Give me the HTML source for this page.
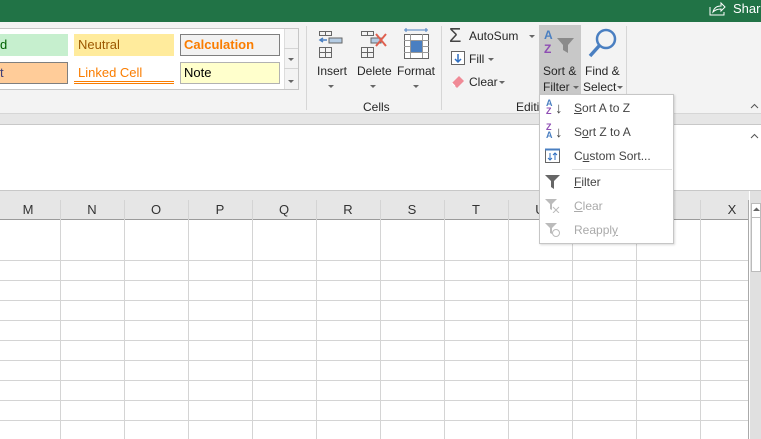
<!DOCTYPE html>
<html><head><style>
*{margin:0;padding:0;box-sizing:border-box}
body{width:761px;height:439px;overflow:hidden;position:relative;font-family:"Liberation Sans",sans-serif;font-size:12px;color:#262626;background:#fff}
.a{position:absolute}
.t{position:absolute;white-space:nowrap}
.vl{position:absolute;width:1px;background:#d4d4d4}
.hl{position:absolute;height:1px;background:#d4d4d4}
.arr{position:absolute;width:0;height:0;border-left:3px solid transparent;border-right:3px solid transparent;border-top:3px solid #666}
.mi{position:absolute;left:34px;font-size:12px;color:#444}
</style></head><body>
<div class="a" style="left:0;top:0;width:761px;height:22px;background:#217346"></div>
<svg class="a" style="left:709px;top:1px" width="18" height="16"><path d="M1 6v8h14v-3" stroke="#fff" fill="none"/><path d="M4 11c1-4 4-6 8-6V2l4 4-4 4V8c-3 0-6 1-8 3z" stroke="#fff" fill="none"/></svg>
<div class="t" style="left:733px;top:1px;color:#fff;font-size:13px">Share</div>
<div class="a" style="left:0;top:22px;width:761px;height:91px;background:#f3f3f3"></div>
<div class="a" style="left:0;top:113px;width:761px;height:12px;background:#e6e6e6;border-top:1px solid #d6d6d6;border-bottom:1px solid #c8c8c8"></div>
<div class="a" style="left:0;top:28px;width:299px;height:62px;background:#fff;border:1px solid #c6c6c6;border-left:none"></div>
<div class="a" style="left:0;top:34px;width:68px;height:22px;background:#c6efce"></div><div class="t" style="left:0;top:37px;color:#006100;font-size:13px">d</div>
<div class="a" style="left:74px;top:34px;width:100px;height:22px;background:#ffeb9c"></div><div class="t" style="left:78px;top:37px;color:#9c5700;font-size:13px">Neutral</div>
<div class="a" style="left:180px;top:34px;width:100px;height:22px;background:#f2f2f2;border:1px solid #7f7f7f"></div><div class="t" style="left:184px;top:37px;color:#fa7d00;font-size:13px;font-weight:bold">Calculation</div>
<div class="a" style="left:0;top:62px;width:68px;height:22px;background:#ffcc99;border:1px solid #7f7f7f;border-left:none"></div><div class="t" style="left:0;top:65px;color:#3f3f76;font-size:13px">t</div>
<div class="t" style="left:78px;top:65px;color:#fa7d00;font-size:13px">Linked Cell</div>
<div class="a" style="left:74px;top:81px;width:100px;height:3px;border-top:1px solid #fa7d00;border-bottom:1px solid #fa7d00"></div>
<div class="a" style="left:180px;top:62px;width:100px;height:22px;background:#ffffcc;border:1px solid #b2b2b2"></div><div class="t" style="left:184px;top:65px;color:#000;font-size:13px">Note</div>
<div class="a" style="left:284px;top:29px;width:14px;height:60px;background:#f3f3f3;border-left:1px solid #ddd"></div>
<div class="hl" style="left:284px;top:48px;width:14px"></div><div class="hl" style="left:284px;top:68px;width:14px"></div>
<div class="arr" style="left:288px;top:58px"></div><div class="arr" style="left:288px;top:80px"></div>
<div class="vl" style="left:306px;top:26px;height:84px;background:#d6d6d6"></div>
<div class="vl" style="left:441px;top:26px;height:84px;background:#d6d6d6"></div>
<div class="vl" style="left:626px;top:26px;height:84px;background:#d6d6d6"></div>
<svg class="a" style="left:316px;top:28px" width="130" height="36">
<g fill="none" stroke="#666"><rect x="3.5" y="3.5" width="6" height="4"/><rect x="9.5" y="3.5" width="6" height="4"/><rect x="3.5" y="19.5" width="6" height="5"/><rect x="9.5" y="19.5" width="6" height="5"/><rect x="3.5" y="24.5" width="6" height="5"/><rect x="9.5" y="24.5" width="6" height="5"/>
<rect x="45.5" y="3.5" width="6" height="4"/><rect x="51.5" y="3.5" width="6" height="4"/><rect x="45.5" y="19.5" width="6" height="5"/><rect x="51.5" y="19.5" width="6" height="5"/><rect x="45.5" y="24.5" width="6" height="5"/><rect x="51.5" y="24.5" width="6" height="5"/></g>
<rect x="13" y="10" width="13" height="5" fill="#b4cce4" stroke="#666"/><path d="M4 12h7M7 10l-3 2 3 2" stroke="#4a7fc1" stroke-width="1.5" fill="none"/>
<rect x="55" y="10" width="10" height="5" fill="#b4cce4" stroke="#666"/><path d="M60 6l10 12M70 6l-10 12" stroke="#e0604f" stroke-width="2"/>
<rect x="88.5" y="6.5" width="24" height="24" fill="#fff" stroke="#666"/><path d="M94.5 6v24M106.5 6v24M88 12.5h25M88 18.5h25M88 24.5h25" stroke="#999"/><rect x="95" y="13" width="11" height="11" fill="#4a7fc1"/><path d="M88 2h24M90 0v4M110 0v4" stroke="#4a7fc1"/>
</svg>
<div class="t" style="left:317px;top:64px">Insert</div><div class="arr" style="left:328px;top:85px"></div>
<div class="t" style="left:357px;top:64px">Delete</div><div class="arr" style="left:370px;top:85px"></div>
<div class="t" style="left:397px;top:64px">Format</div><div class="arr" style="left:413px;top:85px"></div>
<div class="t" style="left:363px;top:100px">Cells</div>
<div class="t" style="left:449px;top:25px;font-size:20px;color:#444">Σ</div>
<div class="t" style="left:469px;top:29px">AutoSum</div><div class="arr" style="left:529px;top:35px"></div>
<svg class="a" style="left:451px;top:51px" width="14" height="15"><rect x="0.5" y="0.5" width="13" height="13" fill="#fff" stroke="#666"/><path d="M7 3v8M4 8l3 3 3-3" stroke="#2f6fc1" stroke-width="1.5" fill="none"/></svg>
<div class="t" style="left:469px;top:52px">Fill</div><div class="arr" style="left:488px;top:58px"></div>
<svg class="a" style="left:451px;top:74px" width="14" height="14"><path d="M1 9l7-7 5 5-7 7z" fill="#f08a96"/><path d="M1 9l3 3" stroke="#fff"/></svg>
<div class="t" style="left:469px;top:75px">Clear</div><div class="arr" style="left:499px;top:81px"></div>
<div class="t" style="left:516px;top:100px">Editi</div>
<div class="a" style="left:539px;top:25px;width:42px;height:70px;background:#c8c8c8"></div>
<div class="t" style="left:544px;top:28px;color:#4a7fc1;font-weight:bold;font-size:12px">A</div>
<div class="t" style="left:544px;top:42px;color:#8e4db3;font-weight:bold;font-size:12px">Z</div>
<svg class="a" style="left:557px;top:38px" width="18" height="16"><path d="M0 0h17l-6 7v8l-5-3V7z" fill="#8a8a8a"/></svg>
<div class="t" style="left:543px;top:64px">Sort &amp;</div>
<div class="t" style="left:543px;top:80px">Filter</div><div class="arr" style="left:573px;top:86px"></div>
<svg class="a" style="left:586px;top:27px" width="32" height="32"><circle cx="20" cy="12" r="9" fill="none" stroke="#4a7fc1" stroke-width="2.5"/><path d="M13 19l-9 10" stroke="#4a7fc1" stroke-width="3.5"/></svg>
<div class="t" style="left:585px;top:64px">Find &amp;</div>
<div class="t" style="left:583px;top:80px">Select</div><div class="arr" style="left:617px;top:86px"></div>
<svg class="a" style="left:750px;top:103px" width="9" height="6"><path d="M1 5l3.5-3.5L8 5" stroke="#555" fill="none"/></svg>
<svg class="a" style="left:750px;top:133px" width="9" height="6"><path d="M1 5l3.5-3.5L8 5" stroke="#555" fill="none"/></svg>
<div class="hl" style="left:0;top:190px;width:761px;background:#c8c8c8"></div>
<div class="a" style="left:0;top:191px;width:749px;height:29px;background:#e6e6e6;border-bottom:1px solid #9b9b9b"></div>
<div id="hdr"></div>
<div class="vl" style="left:748px;top:200px;height:239px;background:#aaa"></div>
<div class="a" style="left:750px;top:191px;width:11px;height:248px;background:#e0e0e0"></div>
<div class="a" style="left:751px;top:203px;width:10px;height:69px;background:#fff;border:1px solid #bbb"></div>
<div class="hl" style="left:752px;top:217px;width:9px;background:#bbb"></div>
<svg class="a" style="left:753px;top:207px" width="7" height="5"><path d="M0 4l3.5-3.5L7 4z" fill="#666"/></svg>
<script>
var L=["M","N","O","P","Q","R","S","T","U","V","W","X"],h="";
for(var i=0;i<12;i++){var x=-4+64*i;h+='<div class="t" style="left:'+(x)+'px;top:202px;width:64px;text-align:center;font-size:13px;color:#333">'+L[i]+'</div>';
h+='<div class="vl" style="left:'+(x+64)+'px;top:200px;height:239px"></div>';}
for(var y=260;y<439;y+=20)h+='<div class="hl" style="left:0;top:'+y+'px;width:748px"></div>';
document.getElementById("hdr").innerHTML=h;
</script>
<div class="a" style="left:539px;top:94px;width:135px;height:150px;background:#fff;border:1px solid #c6c6c6;box-shadow:1px 1px 2px rgba(0,0,0,.15)">
<div class="t" style="left:6px;top:4px;font-size:9px;color:#4a7fc1;font-weight:bold;line-height:8px">A<br><span style="color:#8e4db3">Z</span></div><div class="t" style="left:15px;top:5px;font-size:15px;color:#444">↓</div>
<div class="mi" style="top:6px"><u>S</u>ort A to Z</div>
<div class="t" style="left:6px;top:28px;font-size:9px;color:#8e4db3;font-weight:bold;line-height:8px">Z<br><span style="color:#4a7fc1">A</span></div><div class="t" style="left:15px;top:29px;font-size:15px;color:#444">↓</div>
<div class="mi" style="top:30px">S<u>o</u>rt Z to A</div>
<svg class="a" style="left:5px;top:53px" width="16" height="16"><rect x="0.5" y="1.5" width="14" height="13" fill="#fff" stroke="#666"/><path d="M0 1.5h15" stroke="#4a7fc1" stroke-width="2"/><path d="M5 5v7M3 10l2 2 2-2M10 12V5M8 7l2-2 2 2" stroke="#2f6fc1" fill="none"/></svg>
<div class="mi" style="top:54px">C<u>u</u>stom Sort...</div>
<div class="hl" style="left:32px;top:74px;width:100px;background:#e2e2e2"></div>
<svg class="a" style="left:5px;top:80px" width="16" height="14"><path d="M0 0h15l-6 6v8l-3-2V6z" fill="#666"/></svg>
<div class="mi" style="top:80px"><u>F</u>ilter</div>
<svg class="a" style="left:5px;top:104px" width="16" height="14"><path d="M0 0h12l-5 5v6l-2-1V5z" fill="#bbb"/><path d="M8 8l6 6M14 8l-6 6" stroke="#bbb"/></svg>
<div class="mi" style="top:104px;color:#aaa"><u>C</u>lear</div>
<svg class="a" style="left:5px;top:128px" width="16" height="14"><path d="M0 0h12l-5 5v6l-2-1V5z" fill="#bbb"/><circle cx="11" cy="10" r="3.5" fill="none" stroke="#bbb"/></svg>
<div class="mi" style="top:128px;color:#aaa">Reappl<u>y</u></div>
</div>
</body></html>
